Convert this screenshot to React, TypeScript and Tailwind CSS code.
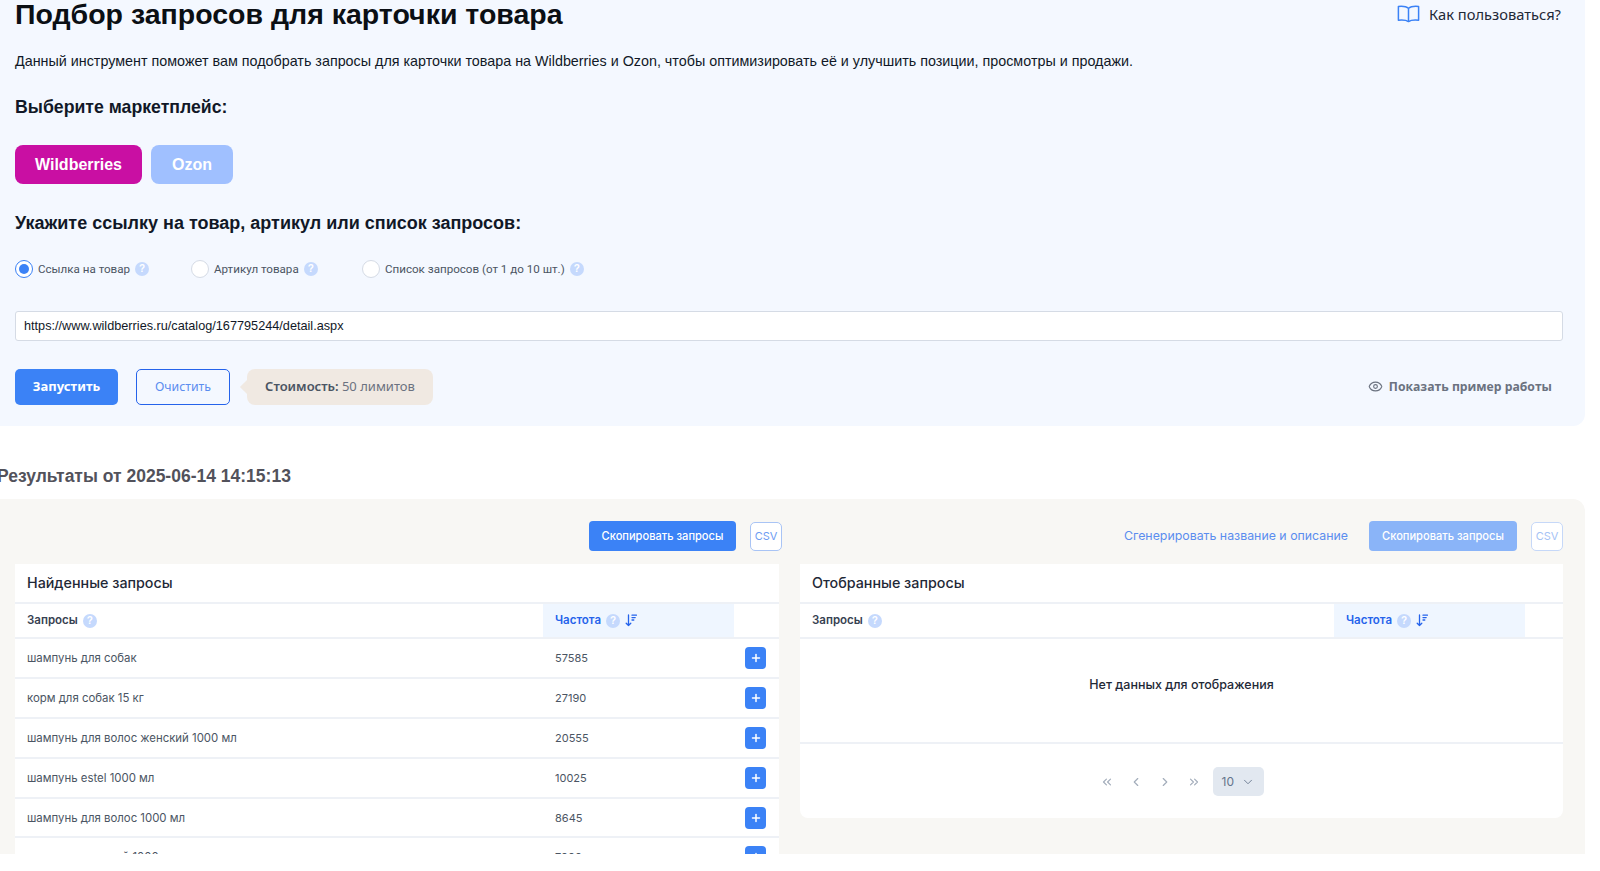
import { ChevronDown, ChevronLeft, ChevronRight, ChevronsLeft, ChevronsRight, Eye, Plus } from "lucide-react";

const ROWS = [
  { query: "шампунь для собак", freq: "57585" },
  { query: "корм для собак 15 кг", freq: "27190" },
  { query: "шампунь для волос женский 1000 мл", freq: "20555" },
  { query: "шампунь estel 1000 мл", freq: "10025" },
  { query: "шампунь для волос 1000 мл", freq: "8645" },
  { query: "шампунь женский 1000 мл", freq: "7000" },
];

function Help({ className = "" }: { className?: string }) {
  return (
    <span
      className={`inline-flex h-[14px] w-[14px] shrink-0 items-center justify-center rounded-full bg-[#c5d9fd] font-['Liberation_Sans',sans-serif] text-[10px] font-bold leading-none text-white ${className}`}
    >
      ?
    </span>
  );
}

function BookIcon() {
  return (
    <svg width="23" height="18" viewBox="0 0 23 18" fill="none" stroke="#3b82f6" strokeWidth="1.5" strokeLinejoin="round">
      <path d="M11.5 3.2C9.6 1.6 5.8 1 1.4 1.4V15.2C5.8 14.8 9.6 15.2 11.5 16.6C13.4 15.2 17.2 14.8 21.6 15.2V1.4C17.2 1 13.4 1.6 11.5 3.2Z" />
      <path d="M11.5 3.2V16.6" />
    </svg>
  );
}

function SortIcon() {
  return (
    <svg width="12" height="13" viewBox="0 0 12 13" fill="none" stroke="#2563eb" strokeWidth="1.3" strokeLinecap="round" strokeLinejoin="round">
      <path d="M3.5 1V11.5M1.2 9.2L3.5 11.5L5.8 9.2" />
      <path d="M7 1.2H11.5M7 3.6H10.2M7 6H8.8" />
    </svg>
  );
}

function Radio({ checked, label, width }: { checked?: boolean; label: string; width: string }) {
  return (
    <label className={`flex items-center ${width}`}>
      <span
        className={`flex h-[18px] w-[18px] shrink-0 items-center justify-center rounded-full border bg-white ${
          checked ? "border-[#3b82f6]" : "border-[#d5dbe5]"
        }`}
      >
        {checked && <span className="h-[10px] w-[10px] rounded-full bg-[#3b82f6]" />}
      </span>
      <span className="ml-[5px] pt-px text-[11.6px] text-[#4b5563]">{label}</span>
      <Help className="ml-[5px]" />
    </label>
  );
}

function TableHead({ title, cols }: { title: string; cols: string }) {
  return (
    <>
      <div className="flex h-[40px] items-center border-b-2 border-[#eef1f6] px-3 text-[14.3px] font-medium text-[#1f2937]">
        {title}
      </div>
      <div className={`grid h-[35px] border-b-2 border-[#eef1f6] text-[11.5px] font-semibold ${cols}`}>
        <div className="flex items-center gap-[5px] px-3 text-[#374151]">
          Запросы <Help />
        </div>
        <div className="flex items-center gap-[5px] bg-[#eff6ff] px-3 text-[#2563eb]">
          Частота <Help /> <SortIcon />
        </div>
        <div />
      </div>
    </>
  );
}

export default function App() {
  return (
    <div className="h-[871px] w-[1600px] overflow-hidden bg-white font-['Liberation_Sans',sans-serif] text-black">
      <section className="h-[426px] w-[1585px] rounded-br-xl bg-[#f4f8ff] pl-[15px] pr-[22px]">
        <div className="flex h-[32px] items-center justify-between">
          <h1 className="mb-[3px] text-[28.5px] font-bold leading-none text-[#0b0f14]">Подбор запросов для карточки товара</h1>
          <a className="mb-[4px] mr-[2px] flex items-center gap-[9px] font-['Noto_Sans',sans-serif] text-[14.7px] text-[#1f2937]">
            <BookIcon />
            Как пользоваться?
          </a>
        </div>
        <p className="mt-[20px] text-[14.33px] leading-[18px] text-[#111827]">
          Данный инструмент поможет вам подобрать запросы для карточки товара на Wildberries и Ozon, чтобы оптимизировать её и улучшить позиции, просмотры и продажи.
        </p>
        <h2 className="mt-[25px] text-[17.7px] font-bold leading-[24px] text-[#111827]">Выберите маркетплейс:</h2>
        <div className="mt-[26px] flex gap-[9px]">
          <button className="h-[39px] w-[127px] rounded-lg bg-[#c90fa3] pt-px text-[16px] font-bold text-white">Wildberries</button>
          <button className="h-[39px] w-[82px] rounded-lg bg-[#a0c0ff] pt-px text-[16px] font-bold text-white">Ozon</button>
        </div>
        <h2 className="mt-[27px] text-[18px] font-bold leading-[24px] text-[#111827]">
          Укажите ссылку на товар, артикул или список запросов:
        </h2>
        <div className="mt-[25px] flex h-[18px] items-center font-['Roboto',sans-serif]">
          <Radio checked label="Ссылка на товар" width="w-[176px]" />
          <Radio label="Артикул товара" width="w-[171px]" />
          <Radio label="Список запросов (от 1 до 10 шт.)" width="w-auto" />
        </div>
        <div className="mt-[33px] flex h-[30px] items-center rounded-[3px] border border-[#d5dbe5] bg-white px-[8px] pt-[2px] text-[12.7px] text-[#111827]">
          https://www.wildberries.ru/catalog/167795244/detail.aspx
        </div>
        <div className="mt-[28px] flex h-[36px] items-center">
          <button className="h-full w-[103px] rounded-[5px] bg-[#3b82f6] font-['Noto_Sans',sans-serif] text-[13px] font-bold text-white">
            Запустить
          </button>
          <button className="ml-[18px] h-full w-[94px] rounded-[5px] border border-[#2563eb] font-['Noto_Sans',sans-serif] text-[12.3px] text-[#5b8def]">
            Очистить
          </button>
          <div className="relative ml-[17px] flex h-full w-[186px] items-center justify-center rounded-lg bg-[#f0e9e2] font-['Noto_Sans',sans-serif] text-[13px] text-[#6b7280]">
            <span className="absolute left-[-5px] top-[13px] h-[10px] w-[10px] rotate-45 bg-[#f0e9e2]" />
            <span className="font-semibold text-[#4b5563]">Стоимость:</span>&nbsp;50 лимитов
          </div>
          <a className="ml-auto mr-[11px] flex items-center gap-[6px] font-['Open_Sans',sans-serif] text-[12.2px] font-bold text-[#6b7280]">
            <Eye size={15} strokeWidth={1.8} />
            Показать пример работы
          </a>
        </div>
      </section>

      <h3 className="ml-[-3px] mt-[38px] h-[35px] text-[17.5px] font-bold leading-[24px] text-[#52525b]">
        Результаты от 2025-06-14 14:15:13
      </h3>

      <section className="h-[355px] w-[1585px] overflow-hidden rounded-tr-xl bg-[#f8f7f4] pl-[15px] pr-[22px] pt-[22px] font-['Inter',sans-serif]">
        <div className="grid grid-cols-[764px_763px] gap-x-[21px]">
          <div>
            <div className="mb-[13px] mr-[-3px] flex h-[30px] items-center justify-end gap-[14px]">
              <button className="h-[30px] w-[147px] rounded-[4px] bg-[#3b82f6] text-[11.1px] font-medium text-white">
                Скопировать запросы
              </button>
              <button className="h-[29px] w-[32px] rounded-[5px] border border-[#a9c4f5] bg-white text-[11px] text-[#6d9cf2]">CSV</button>
            </div>
            <div className="bg-white">
              <TableHead title="Найденные запросы" cols="grid-cols-[1fr_191px_45px]" />
              {ROWS.map((row) => (
                <div key={row.query} className="grid h-[39.9px] grid-cols-[1fr_191px_45px] items-center border-b-2 border-[#eef1f6] text-[#4b5563]">
                  <div className="px-3 text-[11.4px] leading-[16px]">{row.query}</div>
                  <div className="px-3 text-[11px] leading-[16px]">{row.freq}</div>
                  <button className="ml-[11px] flex h-[22px] w-[21px] items-center justify-center rounded-[4px] bg-[#3b82f6] text-white">
                    <Plus size={12} strokeWidth={3} />
                  </button>
                </div>
              ))}
            </div>
          </div>
          <div>
            <div className="mb-[13px] flex h-[30px] items-center justify-end">
              <a className="text-[12.35px] text-[#5b8def]">Сгенерировать название и описание</a>
              <button className="ml-[21px] h-[30px] w-[148px] rounded-[4px] bg-[#8ab4f8] text-[11.1px] font-medium text-white">
                Скопировать запросы
              </button>
              <button className="ml-[14px] h-[29px] w-[32px] rounded-[5px] border border-[#c6d8f8] bg-white text-[11px] text-[#a5c2f5]">CSV</button>
            </div>
            <div className="h-[254px] rounded-b-lg bg-white">
              <TableHead title="Отобранные запросы" cols="grid-cols-[1fr_191px_38px]" />
              <div className="flex h-[105px] items-center justify-center border-b-2 border-[#eef1f6] pb-[10px] text-[12.5px] font-medium text-[#1f2937]">
                Нет данных для отображения
              </div>
              <div className="flex h-[72px] items-center justify-center gap-[15px] pt-[3px] text-[#a3adbb]">
                <ChevronsLeft size={14} />
                <ChevronLeft size={14} />
                <ChevronRight size={14} />
                <ChevronsRight size={14} />
                <div className="ml-[-3px] flex h-[29px] w-[51px] items-center justify-between rounded-[5px] bg-[#e2e8f0] px-[9px] text-[12px] text-[#64748b]">
                  10
                  <ChevronDown size={14} strokeWidth={1.5} />
                </div>
              </div>
            </div>
          </div>
        </div>
      </section>
    </div>
  );
}
